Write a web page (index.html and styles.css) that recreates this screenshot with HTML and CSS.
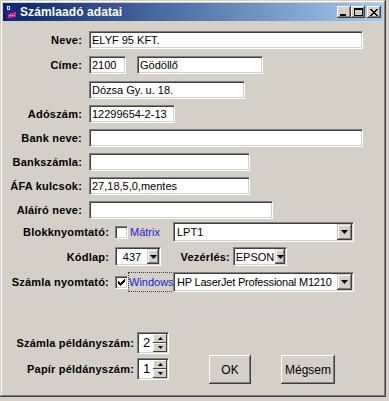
FILE: index.html
```html
<!DOCTYPE html>
<html lang="hu">
<head>
    <meta charset="UTF-8">
    <title>Számlaadó adatai</title>
    <link rel="stylesheet" href="styles.css">
</head>
<body>
    <div class="window">
        <!-- Title bar -->
        <div class="titlebar">
            <svg class="app-icon" width="14" height="15" viewBox="0 0 14 15" shape-rendering="crispEdges">
                <rect x="1" y="0" width="10" height="15" fill="#1a2a8a"/>
                <rect x="2" y="1" width="3" height="4" fill="#d8e8ff"/>
                <rect x="3" y="2" width="1" height="2" fill="#1a2a8a"/>
                <polygon points="3,9 11,7 11,12 3,13" fill="#e0207a"/>
                <rect x="4" y="10" width="6" height="1" fill="#ff6aa8"/>
            </svg>
            <span class="title">Számlaadó adatai</span>
            <div class="controls">
                <span class="ctl">
                    <svg width="8" height="7" viewBox="0 0 8 7" shape-rendering="crispEdges"><rect x="0" y="5" width="6" height="2" fill="#000"/></svg>
                </span>
                <span class="ctl">
                    <svg width="9" height="8" viewBox="0 0 9 8" shape-rendering="crispEdges"><rect x="0" y="0" width="9" height="2" fill="#000"/><rect x="0" y="0" width="1" height="8" fill="#000"/><rect x="8" y="0" width="1" height="8" fill="#000"/><rect x="0" y="7" width="9" height="1" fill="#000"/></svg>
                </span>
                <span class="ctl ctl-close">
                    <svg width="8" height="7" viewBox="0 0 8 7" shape-rendering="crispEdges"><path d="M0 0h2v1h1v1h2v-1h1v-1h2v1h-1v1h-1v1h-1v1h1v1h1v1h1v1h-2v-1h-1v-1h-2v1h-1v1h-2v-1h1v-1h1v-1h1v-1h-1v-1h-1v-1h-1z" fill="#000"/></svg>
                </span>
            </div>
        </div>

        <!-- Company data -->
        <div class="form">
            <div class="row">
                <label class="lbl">Neve:</label>
                <input class="edit w-full" value="ELYF 95 KFT.">
            </div>
            <div class="row row-loose">
                <label class="lbl">Címe:</label>
                <input class="edit w-zip" value="2100">
                <input class="edit w-city" value="Gödöllő">
            </div>
            <div class="row row-loose">
                <span class="lbl"></span>
                <input class="edit w-street" value="Dózsa Gy. u. 18.">
            </div>
            <div class="row">
                <label class="lbl">Adószám:</label>
                <input class="edit w-tax" value="12299654-2-13">
            </div>
            <div class="row">
                <label class="lbl">Bank neve:</label>
                <input class="edit w-full" value="">
            </div>
            <div class="row">
                <label class="lbl">Bankszámla:</label>
                <input class="edit w-mid" value="">
            </div>
            <div class="row">
                <label class="lbl">ÁFA kulcsok:</label>
                <input class="edit w-mid" value="27,18,5,0,mentes">
            </div>
            <div class="row">
                <label class="lbl">Aláíró neve:</label>
                <input class="edit w-sign" value="">
            </div>

            <!-- Printers -->
            <div class="row row-printer">
                <label class="lbl lbl-printer">Blokknyomtató:</label>
                <div class="opt">
                    <span class="check"></span>
                    <span class="opt-text">Mátrix</span>
                </div>
                <div class="combo w-port">
                    <span class="combo-text">LPT1</span>
                    <span class="drop"><svg width="7" height="4" viewBox="0 0 7 4"><polygon points="0,0 7,0 3.5,4" fill="#000"/></svg></span>
                </div>
            </div>
            <div class="row row-codepage">
                <label class="lbl lbl-printer">Kódlap:</label>
                <div class="combo combo-small w-cp">
                    <span class="combo-text">437</span>
                    <span class="drop drop-cp"><svg width="7" height="4" viewBox="0 0 7 4"><polygon points="0,0 7,0 3.5,4" fill="#000"/></svg></span>
                </div>
                <label class="lbl-ctrl">Vezérlés:</label>
                <div class="combo combo-small w-ctrl">
                    <span class="combo-text">EPSON</span>
                    <span class="drop drop-ctrl"><svg width="7" height="4" viewBox="0 0 7 4"><polygon points="0,0 7,0 3.5,4" fill="#000"/></svg></span>
                </div>
            </div>
            <div class="row row-invoice">
                <label class="lbl lbl-printer">Számla nyomtató:</label>
                <div class="opt">
                    <span class="check">
                        <svg width="7" height="7" viewBox="0 0 7 7" shape-rendering="crispEdges"><path d="M6 0h1v3h-1v1h-1v1h-1v1h-1v1h-1v-1h-1v-1h-1v-3h1v1h1v1h1v-1h1v-1h1z" fill="#000"/></svg>
                    </span>
                    <span class="opt-text focus">Windows</span>
                </div>
                <div class="combo w-port">
                    <span class="combo-text combo-long">HP LaserJet Professional M1210</span>
                    <span class="drop"><svg width="7" height="4" viewBox="0 0 7 4"><polygon points="0,0 7,0 3.5,4" fill="#000"/></svg></span>
                </div>
            </div>

            <!-- Copies and buttons -->
            <div class="bottom">
                <div class="copies">
                    <div class="row">
                        <label class="lbl lbl-copies">Számla példányszám:</label>
                        <div class="spin">
                            <span class="spin-val">2</span>
                            <span class="spin-btns">
                                <span class="spin-btn"><svg width="5" height="3" viewBox="0 0 5 3"><polygon points="2.5,0 5,3 0,3" fill="#000"/></svg></span>
                                <span class="spin-btn"><svg width="5" height="3" viewBox="0 0 5 3"><polygon points="0,0 5,0 2.5,3" fill="#000"/></svg></span>
                            </span>
                        </div>
                    </div>
                    <div class="row row-spin">
                        <label class="lbl lbl-copies">Papír példányszám:</label>
                        <div class="spin">
                            <span class="spin-val">1</span>
                            <span class="spin-btns">
                                <span class="spin-btn"><svg width="5" height="3" viewBox="0 0 5 3"><polygon points="2.5,0 5,3 0,3" fill="#000"/></svg></span>
                                <span class="spin-btn"><svg width="5" height="3" viewBox="0 0 5 3"><polygon points="0,0 5,0 2.5,3" fill="#000"/></svg></span>
                            </span>
                        </div>
                    </div>
                </div>
                <div class="buttons">
                    <button class="btn btn-ok">OK</button>
                    <button class="btn btn-cancel">Mégsem</button>
                </div>
            </div>
        </div>
    </div>
</body>
</html>
```

FILE: styles.css
```css
/* Basic page: classic Windows 2000 dialog */
body {
    margin: 0;
    background-color: #d4d0c8;
    font-family: "Liberation Sans", Arial, sans-serif;
    font-size: 11px;
    color: #000;
}

.window {
    width: 386px;
    height: 397px;
    box-sizing: border-box;
    padding: 3px;
    background-color: #d4d0c8;
    box-shadow: inset -1px -1px #404040, inset 1px 1px #d4d0c8,
                inset -2px -2px #808080, inset 2px 2px #fff;
}

/* Title bar */
.titlebar {
    height: 18px;
    display: flex;
    align-items: center;
    background: linear-gradient(to right, #0a246a, #a6caf0);
    color: #fff;
}

.app-icon {
    margin-left: 2px;
}

.title {
    margin-left: 1px;
    font-weight: bold;
    font-size: 12px;
    letter-spacing: 0.1px;
}

.controls {
    margin-left: auto;
    margin-right: 2px;
    display: flex;
}

.ctl {
    width: 14px;
    height: 12px;
    box-sizing: border-box;
    display: flex;
    align-items: center;
    justify-content: center;
    background-color: #d4d0c8;
    box-shadow: inset -1px -1px #404040, inset 1px 1px #fff,
                inset -2px -2px #808080;
}

.ctl-close {
    margin-left: 2px;
}

/* Form rows */
.form {
    padding-top: 10px;
}

.row {
    display: flex;
    align-items: center;
}

.row + .row {
    margin-top: 6px;
}

.row.row-loose {
    margin-top: 7px;
}

.lbl {
    width: 86px;
    box-sizing: border-box;
    padding-right: 7px;
    text-align: right;
    font-weight: bold;
    letter-spacing: 0.2px;
    white-space: nowrap;
}

.lbl-printer {
    width: 112px;
    padding-right: 6px;
}

.lbl-copies {
    width: 134px;
    padding-right: 3px;
}

.lbl-ctrl {
    width: 72px;
    box-sizing: border-box;
    padding-right: 3px;
    text-align: right;
    font-weight: bold;
    letter-spacing: 0.2px;
}

/* Sunken edit boxes */
.edit {
    box-sizing: border-box;
    height: 18px;
    margin: 0;
    padding: 0 2px;
    border: 1px solid;
    border-color: #808080 #fff #fff #808080;
    box-shadow: inset 1px 1px #404040, inset -1px -1px #d4d0c8;
    background-color: #fff;
    font: 11px "Liberation Sans", Arial, sans-serif;
    color: #000;
    outline: none;
}

.w-full { width: 274px; }
.w-zip { width: 37px; }
.w-city { width: 126px; margin-left: 11px; }
.w-street { width: 156px; }
.w-tax { width: 86px; }
.w-mid { width: 161px; }
.w-sign { width: 184px; }

/* Printer rows */
.row.row-printer { margin-top: 3px; }
.row.row-codepage { margin-top: 5px; }
.row.row-invoice { margin-top: 6px; }

.opt {
    width: 58px;
    display: flex;
    align-items: center;
}

.check {
    width: 13px;
    height: 13px;
    flex: none;
    box-sizing: border-box;
    display: flex;
    align-items: center;
    justify-content: center;
    border: 1px solid;
    border-color: #808080 #fff #fff #808080;
    box-shadow: inset 1px 1px #404040, inset -1px -1px #d4d0c8;
    background-color: #fff;
}

.opt-text {
    margin-left: 2px;
    color: #1c1cc8;
    white-space: nowrap;
}

.opt-text.focus {
    margin-left: 1px;
    padding: 3px 0;
    width: 44px;
    overflow: hidden;
    outline: 1px dotted #404040;
}

.combo {
    height: 20px;
    box-sizing: border-box;
    display: flex;
    align-items: stretch;
    padding: 1px;
    border: 1px solid;
    border-color: #808080 #fff #fff #808080;
    box-shadow: inset 1px 1px #404040, inset -1px -1px #d4d0c8;
    background-color: #fff;
}

.combo-small {
    height: 19px;
}

.combo-text {
    flex: 1;
    display: flex;
    align-items: center;
    padding-left: 2px;
    white-space: nowrap;
    overflow: hidden;
}

.combo-long {
    letter-spacing: -0.2px;
}

.combo-small .combo-text {
    justify-content: center;
    padding-left: 0;
}

.w-port { width: 181px; }
.w-cp { width: 46px; }
.w-ctrl { width: 54px; }

.drop {
    width: 15px;
    flex: none;
    display: flex;
    align-items: center;
    justify-content: center;
    background-color: #d4d0c8;
    box-shadow: inset -1px -1px #404040, inset 1px 1px #d4d0c8,
                inset -2px -2px #808080, inset 2px 2px #fff;
}

.drop-cp { width: 12px; }
.drop-ctrl { width: 10px; }

/* Copies + buttons */
.bottom {
    margin-top: 40px;
    display: flex;
    align-items: flex-start;
}

.row.row-spin {
    margin-top: 4px;
}

.spin {
    width: 32px;
    height: 22px;
    box-sizing: border-box;
    display: flex;
    padding: 1px;
    border: 1px solid;
    border-color: #808080 #fff #fff #808080;
    box-shadow: inset 1px 1px #404040, inset -1px -1px #d4d0c8;
    background-color: #fff;
}

.spin-val {
    flex: 1;
    padding-left: 4px;
    font-size: 13px;
    line-height: 18px;
}

.spin-btns {
    width: 14px;
    display: flex;
    flex-direction: column;
}

.spin-btn {
    flex: 1;
    display: flex;
    align-items: center;
    justify-content: center;
    background-color: #d4d0c8;
    box-shadow: inset -1px -1px #404040, inset 1px 1px #fff;
}

.buttons {
    margin-top: 23px;
    margin-left: 40px;
    display: flex;
    gap: 30px;
}

.btn {
    height: 29px;
    box-sizing: border-box;
    padding: 0;
    border: none;
    background-color: #d4d0c8;
    font: 12px "Liberation Sans", Arial, sans-serif;
    color: #000;
    box-shadow: inset -1px -1px #404040, inset 1px 1px #fff,
                inset -2px -2px #808080, inset 2px 2px #d4d0c8;
}

.btn-ok { width: 42px; }
.btn-cancel { width: 54px; }
```
